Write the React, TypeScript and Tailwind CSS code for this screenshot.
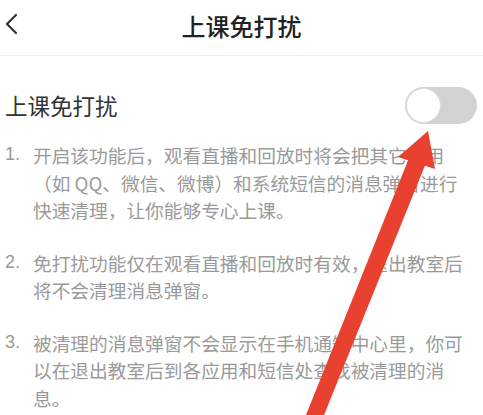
import * as React from "react";

const items: string[][] = [
  [
    "开启该功能后，观看直播和回放时将会把其它应用",
    "（如 QQ、微信、微博）和系统短信的消息弹窗进行",
    "快速清理，让你能够专心上课。",
  ],
  ["免打扰功能仅在观看直播和回放时有效，退出教室后", "将不会清理消息弹窗。"],
  [
    "被清理的消息弹窗不会显示在手机通知中心里，你可",
    "以在退出教室后到各应用和短信处查找被清理的消",
    "息。",
  ],
];

function Toggle() {
  return (
    <div className="w-[72px] h-[37px] rounded-full bg-[#d2d2d2] flex items-center p-[1px]">
      <div className="w-[35px] h-[35px] rounded-full bg-white border border-[#dcdcdc]" />
    </div>
  );
}

export default function App() {
  return (
    <div
      className="relative w-[483px] h-[415px] overflow-hidden bg-white"
      style={{ fontFamily: '"Noto Sans CJK SC", "Noto Sans", sans-serif' }}
    >
      {/* header */}
      <div className="relative h-[56px] border-b border-[#ececec] flex items-center justify-center">
        <svg className="absolute left-[4px] top-[13px]" width="14" height="22" viewBox="0 0 14 22">
          <path d="M12 2 L3 11 L12 20" fill="none" stroke="#333" strokeWidth="2.2" strokeLinecap="round" strokeLinejoin="round" />
        </svg>
        <span className="text-[24px] font-medium text-[#222] leading-none -mt-[4px]">上课免打扰</span>
      </div>

      {/* switch row */}
      <div className="mt-[31px] pl-[5px] pr-[6px] flex items-center justify-between h-[37px]">
        <span className="text-[22.5px] text-[#333] leading-none">上课免打扰</span>
        <Toggle />
      </div>

      {/* notes */}
      <div className="mt-[17px] flex flex-col gap-[25px]">
        {items.map((lines, i) => (
          <div key={i} className="flex text-[18.7px] leading-[27.5px] text-[#9a9a9a]">
            <span className="w-[33px] pl-[5px] shrink-0" style={{ fontFamily: '"Liberation Sans", sans-serif', fontSize: "18px" }}>
              {i + 1}.
            </span>
            <div className="flex flex-col">
              {lines.map((l, j) => (
                <span key={j} className="whitespace-nowrap">
                  {l}
                </span>
              ))}
            </div>
          </div>
        ))}
      </div>

      {/* red arrow overlay */}
      <svg className="absolute left-0 top-0 pointer-events-none" width="483" height="415" viewBox="0 0 483 415">
        <polygon points="409,158 426,163 322,420 304,420" fill="#e8412f" />
        <polygon points="428,131 398,157 435,169" fill="#e8412f" />
      </svg>
    </div>
  );
}
